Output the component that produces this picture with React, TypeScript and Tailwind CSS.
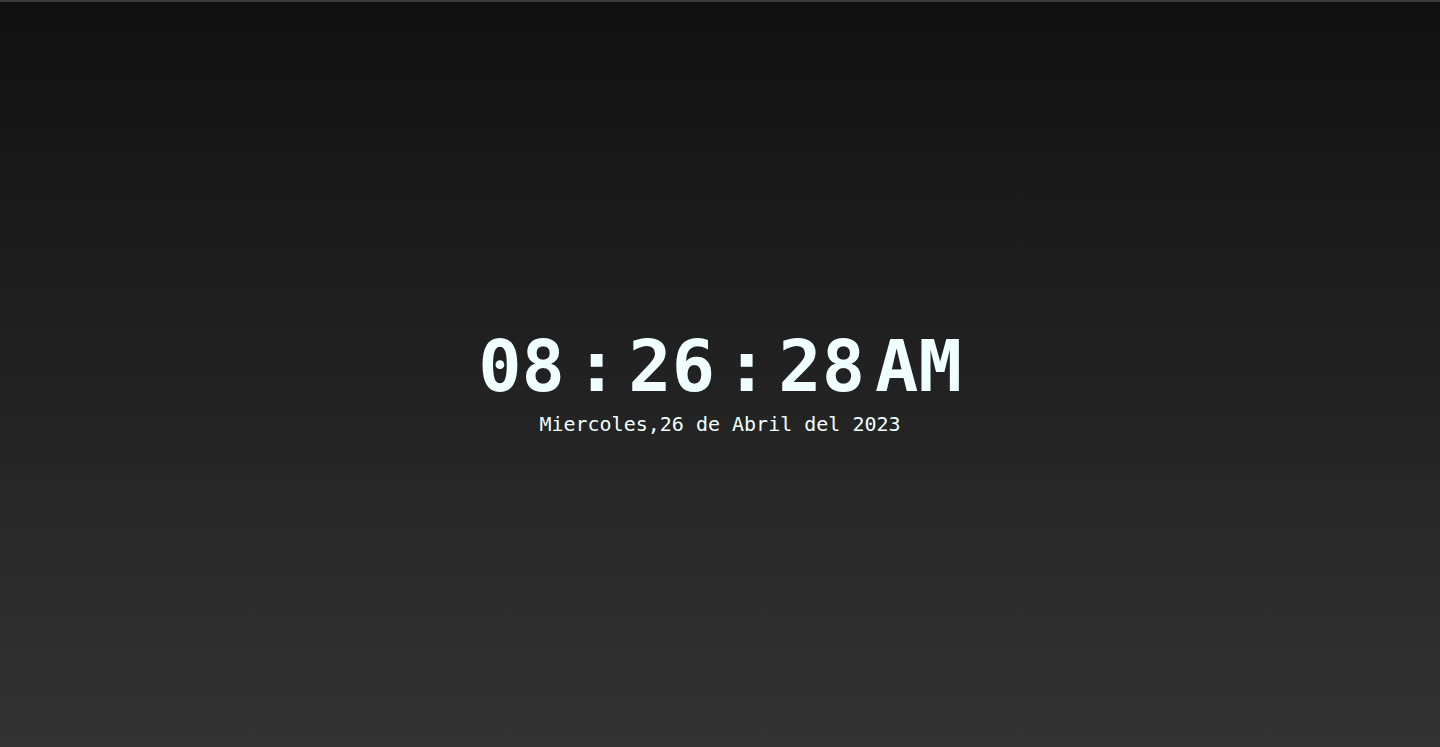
export default function App() {
  const parts = ["08", ":", "26", ":", "28", "AM"];
  return (
    <div className="flex h-[747px] w-full flex-col items-center justify-center border-t-2 border-[#3a3a3a] bg-gradient-to-b from-[#111111] to-[#333333] pt-[10px] text-[#f0ffff] [font-family:'DejaVu_Sans_Mono',monospace]">
      <div className="flex gap-[10px] text-[72px] font-bold leading-[84px]">
        {parts.map((p, i) => (
          <span key={i}>{p}</span>
        ))}
      </div>
      <div className="mt-[4px] text-[20px] leading-[24px]">Miercoles,26 de Abril del 2023</div>
    </div>
  );
}
